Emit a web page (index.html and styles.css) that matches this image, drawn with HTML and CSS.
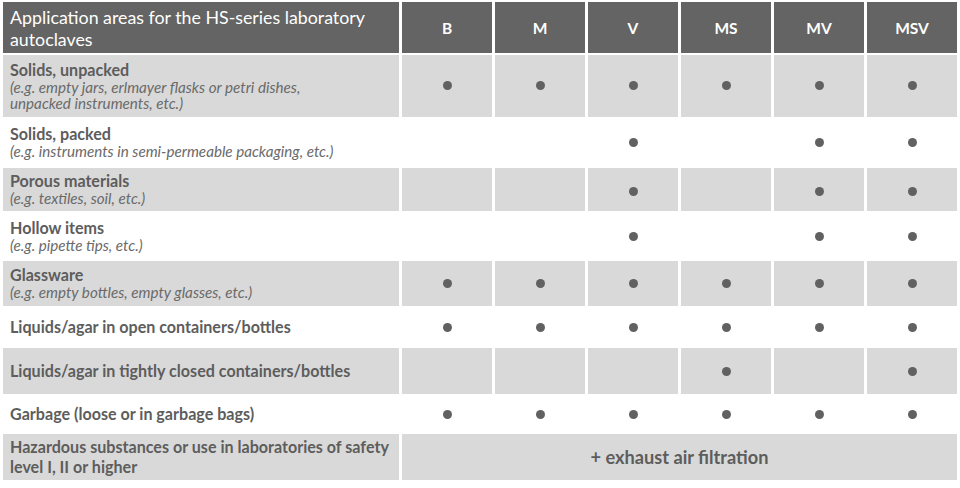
FILE: index.html
```html
<!DOCTYPE html>
<html lang="en">
<head>
<meta charset="utf-8">
<title>HS-series application areas</title>
<link rel="stylesheet" href="styles.css">
</head>
<body>
<table class="apps">
  <thead>
    <tr class="head">
      <th class="area-head">Application areas for the HS-series laboratory autoclaves</th>
      <th>B</th><th>M</th><th>V</th><th>MS</th><th>MV</th><th>MSV</th>
    </tr>
  </thead>
  <tbody>
    <tr class="shade r1">
      <td class="area"><b>Solids, unpacked</b><i>(e.g. empty jars, erlmayer flasks or petri dishes,<br>unpacked instruments, etc.)</i></td>
      <td><span class="dot"></span></td><td><span class="dot"></span></td><td><span class="dot"></span></td><td><span class="dot"></span></td><td><span class="dot"></span></td><td><span class="dot"></span></td>
    </tr>
    <tr class="plain r2">
      <td class="area"><b>Solids, packed</b><i>(e.g. instruments in semi-permeable packaging, etc.)</i></td>
      <td></td><td></td><td><span class="dot"></span></td><td></td><td><span class="dot"></span></td><td><span class="dot"></span></td>
    </tr>
    <tr class="shade r3">
      <td class="area"><b>Porous materials</b><i>(e.g. textiles, soil, etc.)</i></td>
      <td></td><td></td><td><span class="dot"></span></td><td></td><td><span class="dot"></span></td><td><span class="dot"></span></td>
    </tr>
    <tr class="plain r4">
      <td class="area"><b>Hollow items</b><i>(e.g. pipette tips, etc.)</i></td>
      <td></td><td></td><td><span class="dot"></span></td><td></td><td><span class="dot"></span></td><td><span class="dot"></span></td>
    </tr>
    <tr class="shade r5">
      <td class="area"><b>Glassware</b><i>(e.g. empty bottles, empty glasses, etc.)</i></td>
      <td><span class="dot"></span></td><td><span class="dot"></span></td><td><span class="dot"></span></td><td><span class="dot"></span></td><td><span class="dot"></span></td><td><span class="dot"></span></td>
    </tr>
    <tr class="plain r6">
      <td class="area"><b>Liquids/agar in open containers/bottles</b></td>
      <td><span class="dot"></span></td><td><span class="dot"></span></td><td><span class="dot"></span></td><td><span class="dot"></span></td><td><span class="dot"></span></td><td><span class="dot"></span></td>
    </tr>
    <tr class="shade r7">
      <td class="area"><b>Liquids/agar in tightly closed containers/bottles</b></td>
      <td></td><td></td><td></td><td><span class="dot"></span></td><td></td><td><span class="dot"></span></td>
    </tr>
    <tr class="plain r8">
      <td class="area"><b>Garbage (loose or in garbage bags)</b></td>
      <td><span class="dot"></span></td><td><span class="dot"></span></td><td><span class="dot"></span></td><td><span class="dot"></span></td><td><span class="dot"></span></td><td><span class="dot"></span></td>
    </tr>
    <tr class="shade r9">
      <td class="area"><b>Hazardous substances or use in laboratories of safety level I, II or higher</b></td>
      <td class="filter" colspan="6">+ exhaust air filtration</td>
    </tr>
  </tbody>
</table>
</body>
</html>
```
FILE: styles.css
```css
html, body {
  margin: 0;
  padding: 0;
  background: #ffffff;
}

body {
  font-family: Lato, "Open Sans", "Liberation Sans", sans-serif;
  color: #5d5d5d;
}

.apps {
  border-collapse: separate;
  border-spacing: 3px 2.6px;
  margin: 0;
  table-layout: fixed;
  width: 960px;
}

.apps th,
.apps td {
  padding: 0;
  text-align: center;
  vertical-align: middle;
}

.apps th {
  width: 90px;
  background: #646464;
  color: #ffffff;
  font-weight: 700;
  font-size: 15.5px;
  height: 51px;
}

.apps th.area-head {
  width: 396px;
  text-align: left;
  font-weight: 400;
  font-size: 17.8px;
  line-height: 22px;
  padding: 0 20px 0 7px;
  box-sizing: border-box;
}

.shade td {
  background: #d9d9d9;
}

.plain td {
  background: #ffffff;
}

.area {
  text-align: left !important;
  padding: 0 6px 0 7px !important;
}

.area b {
  display: block;
  font-weight: 700;
  font-size: 16.1px;
  line-height: 18px;
}

.r9 .area b {
  line-height: 20px;
}

.area i {
  display: block;
  font-style: italic;
  font-size: 15.2px;
  line-height: 16.5px;
  color: #6a6a6a;
}

.dot {
  display: inline-block;
  width: 9px;
  height: 9px;
  border-radius: 50%;
  background: #616161;
  vertical-align: middle;
}

.r1 td { height: 62px; }
.r2 td { height: 47px; }
.r3 td { height: 43px; }
.r4 td { height: 46px; }
.r5 td { height: 45px; }
.r6 td { height: 38px; }
.r7 td { height: 46px; }
.r8 td { height: 36px; }
.r9 td { height: 46px; }

.r1 .dot { margin-top: -6px; }
.r2 .dot, .r4 .dot, .r5 .dot, .r6 .dot, .r8 .dot { margin-top: -4px; }
.r7 .dot { margin-top: -4px; }

.filter {
  font-weight: 700;
  font-size: 18.2px;
  color: #5d5d5d;
}
```
